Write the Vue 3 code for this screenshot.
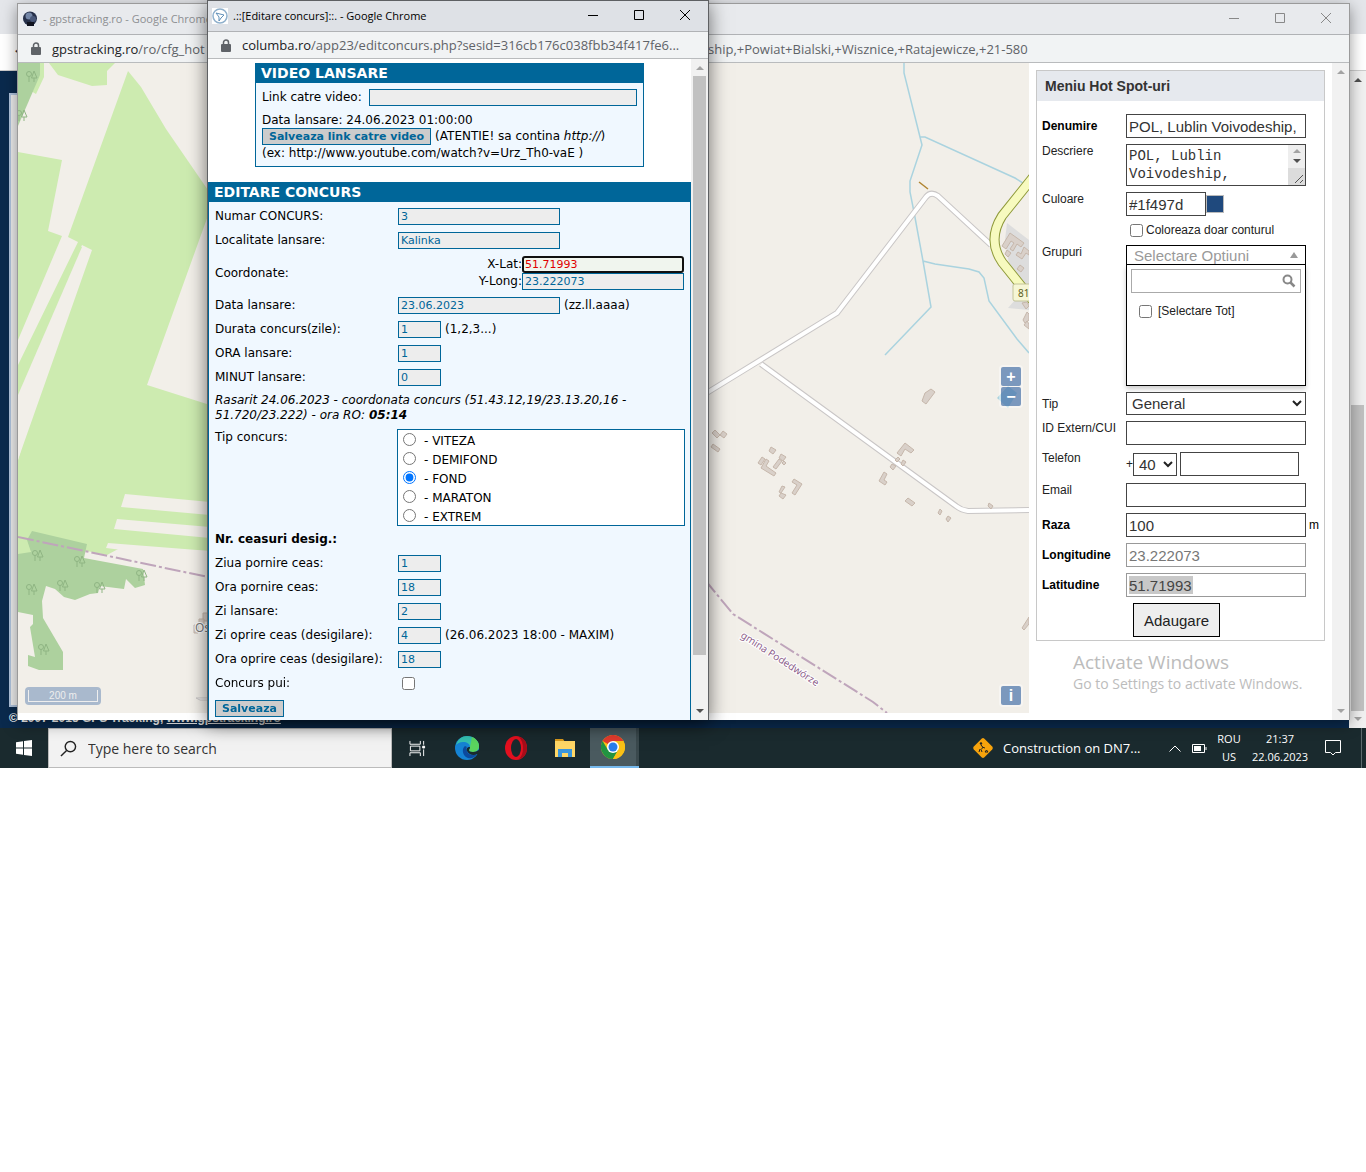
<script setup>
import { ref, onMounted } from 'vue'

const latField = ref(null)
const xLat = ref('51.71993')
const yLong = ref('23.222073')
const raceType = ref('FOND')
const raceTypes = ['VITEZA', 'DEMIFOND', 'FOND', 'MARATON', 'EXTREM']

const mainRows = ref([
  { id: 'numar', label: 'Numar CONCURS:', value: '3', wide: true },
  { id: 'localitate', label: 'Localitate lansare:', value: 'Kalinka', wide: true }
])
const startRows = ref([
  { id: 'data', label: 'Data lansare:', value: '23.06.2023', wide: true, note: '(zz.ll.aaaa)' },
  { id: 'durata', label: 'Durata concurs(zile):', value: '1', note: '(1,2,3...)' },
  { id: 'ora', label: 'ORA lansare:', value: '1' },
  { id: 'minut', label: 'MINUT lansare:', value: '0' }
])
const clockRows = ref([
  { id: 'ziua-pornire', label: 'Ziua pornire ceas:', value: '1' },
  { id: 'ora-pornire', label: 'Ora pornire ceas:', value: '18' },
  { id: 'zi-lansare', label: 'Zi lansare:', value: '2' },
  { id: 'zi-oprire', label: 'Zi oprire ceas (desigilare):', value: '4', note: '(26.06.2023 18:00 - MAXIM)' },
  { id: 'ora-oprire', label: 'Ora oprire ceas (desigilare):', value: '18' }
])

const trees = [
  [26, 71], [16, 110], [32, 550], [74, 556], [136, 570], [26, 584], [57, 580], [94, 582], [38, 644]
]

const buildings = [
  'M715 430l5 5-3 3-5-5z', 'M723 431l4 3-3 4-4-3z', 'M713 444l7 5-2 3-7-5z',
  'M771 447l5 3-3 4-4-3z', 'M781 454l5 3-3 4-4-3z', 'M762 457l3 2-4 6-3-2z',
  'M766 459l3 2-3 5 10 7-2 3-13-8z', 'M779 459l3 2-6 8-3-2z', 'M784 461l2 2-2 2-2-2z',
  'M794 479l8 5-7 11-3-2 5-8-5-3z', 'M782 486l3 1-4 6-2-1z', 'M781 493l5 2-3 4-4-3z',
  'M931 389l4 3-9 12-4-3 3-8z', 'M905 443l9 7-3 3-6-4-4 7-4-3z', 'M898 457l2 2-3 3-2-2z',
  'M903 460l3 2-3 4-2-2z', 'M892 464l4 2-3 4-3-3z', 'M884 472l3 2-3 6 3 2-2 3-6-4z',
  'M908 498l7 5-3 3-7-5z', 'M940 509l2 2-2 4-2-2z', 'M948 516l3 2-3 4-2-3z',
  'M989 503l4 3-2 3-3-3z', 'M1029 617v7l-5 6-2-2z',
  'M1010 233l14 10-3 4-4-3-4 7-3-2 4-6-3-2-5 8-4-3z', 'M1024 247l5 4v4l-3-2-4 6-6-4 2-3 3 2z',
  'M1007 250l4 3-3 4-3-3z', 'M1020 265l4 3-3 4-4-3z', 'M1022 303l5-1 2 4-3 3z',
  'M1027 312l2 2v6l-4 3-2-3z', 'M1027 321l2 3v5l-5-4z',
  'M203 613h5v8h-5z', 'M199 619h5v5h-5z', 'M194 625h4v8h-4z'
]

onMounted(() => latField.value?.focus({ preventScroll: true }))
</script>

<template>
  <div class="screen">
    <main class="desktop">
      <section class="browser">
        <div class="browser-tabs"></div>
        <div class="browser-tools"><span class="back">←</span></div>
        <div class="browser-body">
          <div class="site">
            <div class="site-frame"></div>
            <p class="copyright">© 2007-2015 GPS Tracking, <a href="#">www.gpstracking.ro</a></p>
          </div>
          <div class="scrollbar page-scroll">
            <i class="arrow up"></i>
            <i class="thumb"></i>
            <i class="arrow down pale"></i>
          </div>
        </div>
      </section>

      <section class="window tracking">
        <header class="titlebar">
          <svg class="favicon" viewBox="0 0 16 16"><rect width="16" height="16" fill="#e6eaf0" /><circle cx="8" cy="7.500" r="7" fill="#26304a" /><circle cx="7" cy="5" r="3.500" fill="#7487a8" /><circle cx="11" cy="8" r="3" fill="#49587a" /><path d="M5 11h7v4H5z" fill="#10131f" /></svg>
          <h1>- gpstracking.ro - Google Chrome</h1>
          <div class="controls">
            <button aria-label="Minimize"><svg viewBox="0 0 12 12"><path d="M1 6.500h10" /></svg></button>
            <button aria-label="Maximize"><svg viewBox="0 0 12 12"><path d="M1.500 1.500h9v9h-9z" /></svg></button>
            <button aria-label="Close"><svg viewBox="0 0 12 12"><path d="M1 1l10 10M11 1L1 11" /></svg></button>
          </div>
        </header>
        <div class="address">
          <svg class="lock" viewBox="0 0 10 13"><path d="M2.500 6V3.500a2.500 2.500 0 0 1 5 0V6" fill="none" stroke="#5f6368" stroke-width="1.500" /><rect y="5" width="10" height="8" rx="1" fill="#5f6368" /></svg>
          <span class="address-start"><b>gpstracking.ro</b>/ro/cfg_hot</span>
          <span class="address-end">ship,+Powiat+Bialski,+Wisznice,+Ratajewicze,+21-580</span>
        </div>
        <div class="window-body">
          <div class="map">
            <svg class="map-art" viewBox="18 63 1011 650" preserveAspectRatio="xMinYMin slice">
              <defs>
                <g id="tree" fill="none" stroke="#8fb583" stroke-width="1">
                  <circle cx="3" cy="3" r="2.500" /><path d="M3 5.500V11M8 0l3 7H5.500zM8 7v4" />
                </g>
              </defs>
              <path d="M18 63h1011v650H18z" fill="#f2efe9" />
              <g fill="#cdebb0">
                <path d="M49 63l9 12 34 11 15-1V71l8-8zM40 63h4v14l-8 17-5-3z" />
                <path d="M18 152l44 8-14 71 14 5-44 104z" />
                <path d="M128 71l13 16 25 42 44 64v17l-63 175 63 20v146l-90-3-13 7-20-4-72 10-1-90L92 250l-10-5-64 140v-20l60-123-10-5z" />
                <path d="M79 246l3 1-64 148v-26z" />
              </g>
              <g fill="#f2efe9">
                <path d="M125 494l85 8v13l-89-8zM117 519l93 8v11l-96-9zM108 543l102 8v10l-104-13z" />
                <path d="M18 432l9-3-9 31z" />
              </g>
              <g fill="#add19e">
                <path d="M18 63h22v12L18 126z" />
                <path d="M32 531l55 13-3 14 59 11 2 16-10 3-9-9-2 10-24-3-2 7-8 1-15 6-11-3-9-8-9-3-4 15 1 17 20 34v18H39l-11-4v-11l7 2-5-30 3-3v-9l-15-3v-58l13-2-4-12z" />
              </g>
              <use v-for="(t, i) in trees" :key="i" href="#tree" :x="t[0]" :y="t[1]" />
              <g fill="#ddd">
                <path d="M1007 223l22 17v70l-21-2 21 23-21-23 7-8-10-60z" />
              </g>
              <g fill="none" stroke="#aad3df" stroke-width="1.500">
                <path d="M904 63v10l16 64 2 8-12 36v11l4 20 9 49 8 46-46 48M920 137h5l90 41 14 9M923 261l12 3 34 5 10 3 5 6 5 23 28 38 12 14" />
              </g>
              <path d="M997 398l11-12 9 7-9 15z" fill="#aad3df" />
              <g fill="none" stroke="#c9c6c6" stroke-width="6">
                <path d="M705 394l132-81 89-116q5-6 12-1l53 49M761 364l195 142q5 4 12 5l61-1" />
              </g>
              <g fill="none" stroke="#fff" stroke-width="4">
                <path d="M705 394l132-81 89-116q5-6 12-1l53 49M761 364l195 142q5 4 12 5l61-1" />
              </g>
              <path d="M919 182l9 7" stroke="#b08430" stroke-width="1.500" />
              <path d="M1034 176l-32 40q-15 24 0 46l32 40" fill="none" stroke="#8f9a3a" stroke-width="10" />
              <path d="M1034 176l-32 40q-15 24 0 46l32 40" fill="none" stroke="#f7fabf" stroke-width="8" />
              <g fill="#d9d0c9" stroke="#c6b7ab" stroke-width="1"><path v-for="(d, i) in buildings" :key="i" :d="d" /></g>
              <rect x="1013" y="284" width="24" height="17" rx="2" fill="#f6f6d5" stroke="#c4c49a" />
              <text x="1018" y="297" class="road-no">81</text>
              <g fill="none" stroke="#bfa5bb" stroke-width="2" stroke-dasharray="16 3 3 3">
                <path d="M18 537l190 40M705 580l28 34 140 88 14 11" />
              </g>
              <text class="commune" transform="translate(740 637) rotate(33)">gmina Podedwórze</text>
              <text x="195" y="632" class="village">Os</text>
              <path d="M196 698h14v2h-10z" fill="#fff" stroke="#c9c6c6" stroke-width="1" />
            </svg>
            <div class="zoom-box">
              <button aria-label="Zoom in">+</button>
              <button aria-label="Zoom out">−</button>
            </div>
            <div class="info-box"><button>i</button></div>
            <div class="scale"><span>200 m</span></div>
          </div>

          <aside class="side">
            <form class="spot" @submit.prevent>
              <h2>Meniu Hot Spot-uri</h2>
              <div class="spot-rows">
                <div class="row bold"><label for="name">Denumire</label><input id="name" value="POL, Lublin Voivodeship,"></div>
                <div class="row">
                  <label for="desc">Descriere</label>
                  <div class="area">
                    <textarea id="desc">POL, Lublin Voivodeship,</textarea>
                    <div class="area-scroll">
                      <i class="arrow up"></i><i class="arrow down"></i>
                      <svg viewBox="0 0 17 17"><path d="M7 15l8-8M12 15l3-3" stroke="#555" fill="none" /></svg>
                    </div>
                  </div>
                </div>
                <div class="row">
                  <label for="colour">Culoare</label>
                  <div class="colour"><input id="colour" value="#1f497d"><i class="swatch"></i></div>
                </div>
                <div class="row outline"><span></span><label><input type="checkbox"> Coloreaza doar conturul</label></div>
                <div class="row groups">
                  <label for="groups">Grupuri</label>
                  <div class="multi">
                    <button id="groups" class="multi-head" type="button"><span>Selectare Optiuni</span><i class="arrow up"></i></button>
                    <div class="multi-body">
                      <div class="multi-search">
                        <input aria-label="Cauta">
                        <svg viewBox="0 0 14 14"><circle cx="5.500" cy="5.500" r="4" fill="none" stroke="#888" stroke-width="2" /><path d="M8.500 8.500l4 4" stroke="#888" stroke-width="2.500" /></svg>
                      </div>
                      <label><input type="checkbox">[Selectare Tot]</label>
                    </div>
                  </div>
                </div>
                <div class="row tip">
                  <label for="kind">Tip</label>
                  <div class="select"><select id="kind"><option>General</option></select><svg viewBox="0 0 10 7"><path d="M1 1l4 4 4-4" /></svg></div>
                </div>
                <div class="row"><label for="ext">ID Extern/CUI</label><input id="ext"></div>
                <div class="row">
                  <label for="phone">Telefon</label>
                  <div class="phone">
                    <span>+</span>
                    <div class="select"><select aria-label="Prefix"><option>40</option></select><svg viewBox="0 0 10 7"><path d="M1 1l4 4 4-4" /></svg></div>
                    <input id="phone">
                  </div>
                </div>
                <div class="row"><label for="mail">Email</label><input id="mail"></div>
                <div class="row bold"><label for="radius">Raza</label><input id="radius" value="100"><span>m</span></div>
                <div class="row bold"><label for="lng">Longitudine</label><input id="lng" class="muted" value="23.222073"></div>
                <div class="row bold"><label for="lat">Latitudine</label><input id="lat" class="muted picked" value="51.71993"></div>
                <div class="row"><span></span><button class="add">Adaugare</button></div>
              </div>
            </form>
            <div class="activate">
              <p class="activate-title">Activate Windows</p>
              <p>Go to Settings to activate Windows.</p>
            </div>
          </aside>
          <div class="scrollbar"><i class="arrow up pale"></i><i class="arrow down pale"></i></div>
        </div>
      </section>

      <section class="window contest">
        <header class="titlebar">
          <svg class="favicon" viewBox="0 0 16 16"><rect width="16" height="16" fill="#fff" /><circle cx="8" cy="8" r="7" fill="none" stroke="#8fb0cc" stroke-width="1.500" /><path d="M4 5l4 1 4 1-3 3-2 3V9z" fill="none" stroke="#5f8fb8" /></svg>
          <h1>.::[Editare concurs]::. - Google Chrome</h1>
          <div class="controls">
            <button aria-label="Minimize"><svg viewBox="0 0 12 12"><path d="M1 6.500h10" /></svg></button>
            <button aria-label="Maximize"><svg viewBox="0 0 12 12"><path d="M1.500 1.500h9v9h-9z" /></svg></button>
            <button aria-label="Close"><svg viewBox="0 0 12 12"><path d="M1 1l10 10M11 1L1 11" /></svg></button>
          </div>
        </header>
        <div class="address">
          <svg class="lock" viewBox="0 0 10 13"><path d="M2.500 6V3.500a2.500 2.500 0 0 1 5 0V6" fill="none" stroke="#5f6368" stroke-width="1.500" /><rect y="5" width="10" height="8" rx="1" fill="#5f6368" /></svg>
          <span><b>columba.ro</b>/app23/editconcurs.php?sesid=316cb176c038fbb34f417fe6...</span>
        </div>
        <div class="window-body">
          <div class="forms">
            <form class="panel video" @submit.prevent>
              <h2>VIDEO LANSARE</h2>
              <div class="video-body">
                <div class="video-link"><label for="video">Link catre video:</label><input id="video"></div>
                <p>Data lansare: 24.06.2023 01:00:00</p>
                <p class="video-save"><button class="save">Salveaza link catre video</button> <span>(ATENTIE! sa contina <em>http://</em>)</span></p>
                <p>(ex: http://www.youtube.com/watch?v=Urz_Th0-vaE )</p>
              </div>
            </form>

            <form class="panel edit" @submit.prevent>
              <h2>EDITARE CONCURS</h2>
              <div class="edit-body">
                <div v-for="r in mainRows" :key="r.id" class="line">
                  <label :for="r.id">{{ r.label }}</label>
                  <input :id="r.id" v-model="r.value" :class="{ wide: r.wide }">
                </div>
                <div class="line coords">
                  <span>Coordonate:</span>
                  <div class="pair">
                    <div><label for="xlat">X-Lat:</label><input id="xlat" ref="latField" v-model="xLat" class="wide active"></div>
                    <div><label for="ylong">Y-Long:</label><input id="ylong" v-model="yLong" class="wide"></div>
                  </div>
                </div>
                <div v-for="r in startRows" :key="r.id" class="line">
                  <label :for="r.id">{{ r.label }}</label>
                  <div class="value"><input :id="r.id" v-model="r.value" :class="{ wide: r.wide }"><span>{{ r.note }}</span></div>
                </div>
                <p class="sunrise">Rasarit 24.06.2023 - coordonata concurs (51.43.12,19/23.13.20,16 -<br>51.720/23.222) - ora RO: <b>05:14</b></p>
                <div class="line kinds">
                  <span>Tip concurs:</span>
                  <div class="kind-box">
                    <label v-for="k in raceTypes" :key="k"><input v-model="raceType" type="radio" name="kind" :value="k"><span>- {{ k }}</span></label>
                  </div>
                </div>
                <p class="line subhead">Nr. ceasuri desig.:</p>
                <div v-for="r in clockRows" :key="r.id" class="line">
                  <label :for="r.id">{{ r.label }}</label>
                  <div class="value"><input :id="r.id" v-model="r.value"><span>{{ r.note }}</span></div>
                </div>
                <div class="line"><label for="pui">Concurs pui:</label><input id="pui" type="checkbox"></div>
                <button class="save">Salveaza</button>
              </div>
            </form>
          </div>
          <div class="scrollbar"><i class="arrow up pale"></i><i class="thumb"></i><i class="arrow down"></i></div>
        </div>
      </section>
    </main>

    <footer class="taskbar">
      <button class="start" aria-label="Start"><svg viewBox="0 0 16 16"><path d="M0 2.300l7-1V7.500H0zM8 1.100L16 0v7.500H8zM0 8.500h7v6.200l-7-1zM8 8.500h8V16l-8-1.100z" fill="#fff" /></svg></button>
      <label class="search">
        <svg viewBox="0 0 18 18"><circle cx="11" cy="7" r="5.500" /><path d="M7 11l-6 6" /></svg>
        <input placeholder="Type here to search" aria-label="Search">
      </label>
      <button class="app" aria-label="Task view"><svg class="small" viewBox="0 0 18 18" fill="none" stroke="#fff"><path d="M1 1v3.500h11V1M1 17v-3.500h11V17M1.500 6.500h10v5h-10zM15.500 1v4M15.500 10v7" /><path d="M14.500 6.500h2v2h-2z" fill="#fff" /></svg></button>
      <button class="app" aria-label="Edge">
        <svg viewBox="0 0 24 24"><circle cx="12" cy="12" r="12" fill="#1583d4" /><path d="M1 9C3 3 7 0 12 0c7 0 12 5 12 10 0 4-3 6-6 6s-4-1-4-2c0-1 1-1 1-3 0-3-3-5-7-5-3 0-5 1-7 3z" fill="#35c1b1" /><path d="M17 1c5 2 7 6 7 9 0 4-3 6-6 6s-4-1-4-2c0-1 1-1 1-3z" fill="#5bd65f" /><path d="M10 10c-3 2-3 8 1 11 3 2 8 2 11-3-4 2-9 1-10-3-1-2-1-3 0-4z" fill="#0c4a9e" /><path d="M15 11c0 2-1 2-1 3 0 1 1 2 4 2 2 0 4-1 6-2v4l-2 0c-3 2-8 1-10-3-1-2 0-4 3-4z" fill="#1a2a2e" /></svg>
      </button>
      <button class="app" aria-label="Opera">
        <svg viewBox="0 0 24 24"><ellipse cx="12" cy="12" rx="11" ry="12" fill="#e3101f" /><ellipse cx="12" cy="12" rx="5" ry="9" fill="#1a2a2e" /><path d="M15 1c5 1 8 5 8 11s-3 10-8 11c3-3 4-7 4-11s-1-8-4-11z" fill="#a60d1a" /></svg>
      </button>
      <button class="app" aria-label="File Explorer">
        <svg viewBox="0 0 24 24"><path d="M2 3h8l2 3H2z" fill="#d99a1c" /><path d="M2 5h20v16H2z" fill="#ffd766" /><path d="M5 13h14v8h-4v-4H9v4H5z" fill="#3a96dd" /></svg>
      </button>
      <button class="app running" aria-label="Chrome">
        <svg viewBox="0 0 24 24"><circle cx="12" cy="12" r="12" fill="#fbc116" /><path d="M12 12L1.600 6A12 12 0 0 1 22.400 6H12z" fill="#e33b2e" /><path d="M1.600 6A12 12 0 0 0 12 24l5.200-9L12 12l-5 3z" fill="#229342" /><path d="M12 6h10.400A12 12 0 0 1 12 24l5.200-9z" fill="#fbc116" /><circle cx="12" cy="12" r="6" fill="#fff" /><circle cx="12" cy="12" r="4.500" fill="#2a7de9" /></svg>
      </button>
      <i class="stacked"></i>
      <div class="tray">
        <svg class="works" viewBox="0 0 22 22"><rect x="3.500" y="3.500" width="15" height="15" rx="2" transform="rotate(45 11 11)" fill="#f7a30c" /><circle cx="9" cy="6.500" r="1.200" fill="#222" /><path d="M9 8l2 2.500-2 2 1 2.500M10 10l3 1M8 12l-1 3M13 15h3l-1.500-2z" fill="none" stroke="#222" stroke-width="1" /></svg>
        <span class="news">Construction on DN7...</span>
        <svg class="chevron" viewBox="0 0 12 7"><path d="M0.500 6.500L6 1l5.500 5.500" /></svg>
        <svg class="battery" viewBox="0 0 15 9"><path d="M0.500 0.500h12v8h-12zM14 3v3" fill="none" stroke="#fff" /><path d="M2 2h7v5H2z" fill="#fff" /></svg>
        <span class="stack lang">ROU<br>US</span>
        <span class="stack clock">21:37<br>22.06.2023</span>
        <svg class="notice" viewBox="0 0 16 16"><path d="M0.500 0.500h15v12h-5L8 15l-2.500-2.500h-5z" /></svg>
      </div>
    </footer>
  </div>
</template>

<style>
body {
  margin: 0;
  background: #fff;
}
</style>

<style scoped>
* {
  box-sizing: border-box;
}
h1, h2, p {
  margin: 0;
}
button, input, select, textarea {
  margin: 0;
  border-radius: 0;
  font-family: inherit;
}
i {
  display: block;
  flex: none;
}
svg {
  flex: none;
}
.screen {
  font: 12px/14px "Liberation Sans", sans-serif;
  color: #000;
}
.desktop {
  display: grid;
  grid-template-columns: 100%;
}
.desktop > * {
  grid-area: 1 / 1;
}

.browser {
  display: flex;
  flex-direction: column;
}
.browser-tabs {
  height: 34px;
  background: #e4e6ea;
}
.browser-tools {
  height: 37px;
  padding: 8px 13px;
  background: #fff;
  border-bottom: 1px solid #ccc;
}
.browser-body {
  flex: 1;
  display: flex;
}
.site {
  flex: 1;
  display: flex;
  flex-direction: column;
  padding: 22px 9px 2px;
  background: #0a2a4d;
}
.site-frame {
  flex: 1;
  border: 2px solid #b0c4de;
  background: #eee;
}
.copyright {
  padding-top: 3px;
  font-size: 12px;
  line-height: 16px;
  font-weight: bold;
  color: #fff;
}
.copyright a {
  color: #fff;
}

.scrollbar {
  flex: none;
  display: flex;
  flex-direction: column;
  justify-content: space-between;
  align-items: center;
  width: 17px;
  padding: 7px 0;
  background: #f1f1f1;
}
.arrow {
  border: 4px solid transparent;
}
.up {
  border-top-width: 0;
  border-bottom-color: #505050;
}
.down {
  border-bottom-width: 0;
  border-top-color: #505050;
}
.up.pale {
  border-bottom-color: #a3a3a3;
}
.down.pale {
  border-top-color: #a3a3a3;
}
.thumb {
  width: 13px;
  background: #c1c1c1;
}
.page-scroll .thumb {
  height: 306px;
  margin: auto 0 6px;
}

.window {
  display: flex;
  flex-direction: column;
  border: 1px solid #9a9a9a;
  border-bottom: 0;
  background: #fff;
}
.tracking {
  z-index: 1;
  margin: 3px 16px 8px 17px;
  box-shadow: 0 4px 14px rgba(0, 0, 0, 0.4);
}
.contest {
  z-index: 2;
  width: 502px;
  margin: 0 0 8px 207px;
  border-color: #5e6063;
  box-shadow: 0 4px 18px rgba(0, 0, 0, 0.55);
}
.titlebar {
  display: flex;
  align-items: center;
  height: 31px;
  padding-left: 4px;
  background: #e8eaed;
  border-bottom: 1px solid #b0b2b5;
}
.contest .titlebar {
  background: #dee1e6;
}
.favicon {
  width: 16px;
  height: 16px;
}
h1 {
  flex: 1;
  padding-left: 5px;
  font: 11px/16px "Open Sans", "Noto Sans", sans-serif;
  white-space: nowrap;
}
.tracking h1 {
  color: #8d8f92;
}
.controls {
  display: flex;
}
.controls button {
  width: 46px;
  height: 30px;
  padding: 0;
  border: 0;
  background: none;
}
.controls svg {
  width: 12px;
  height: 12px;
  fill: none;
  stroke: #000;
}
.tracking .controls svg {
  stroke: #888;
}
.address {
  display: flex;
  align-items: center;
  height: 28px;
  padding-left: 13px;
  background: #f1f3f4;
  border-bottom: 1px solid #b9bbbd;
  font: 13px/18px "Open Sans", "Noto Sans", sans-serif;
  color: #5f6368;
  white-space: nowrap;
}
.contest .address {
  height: 27px;
}
.address b {
  font-weight: normal;
  color: #202124;
}
.lock {
  width: 10px;
  height: 13px;
  margin-right: 11px;
}
.address-start {
  flex: none;
  width: 656px;
}
.window-body {
  flex: 1;
  display: flex;
}

.map {
  flex: 1;
  position: relative;
  margin-bottom: 7px;
  overflow: hidden;
  background: #f2efe9;
}
.map-art {
  position: absolute;
  inset: 0;
  width: 100%;
  height: 100%;
}
.commune, .village {
  font: 10px "Noto Sans", sans-serif;
  fill: #8d618b;
  stroke: #fff;
  stroke-width: 2px;
  paint-order: stroke;
}
.village {
  font-size: 12px;
  fill: #777;
}
.road-no {
  font: 10px "Noto Sans", sans-serif;
  fill: #5d6021;
}
.zoom-box, .info-box {
  position: absolute;
  right: 6px;
  display: grid;
  gap: 1px;
  padding: 2px;
  border-radius: 4px;
  background: rgba(255, 255, 255, 0.4);
}
.zoom-box {
  top: 302px;
}
.info-box {
  bottom: 6px;
}
.zoom-box button, .info-box button {
  width: 20px;
  height: 19px;
  padding: 0;
  border: 0;
  border-radius: 2px;
  background: rgba(0, 60, 136, 0.5);
  color: #fff;
  font: bold 16px/18px "Liberation Sans", sans-serif;
}
.scale {
  position: absolute;
  left: 7px;
  bottom: 8px;
  padding: 3px;
  border-radius: 4px;
  background: #a9b9cd;
}
.scale span {
  display: block;
  width: 70px;
  height: 12px;
  border: 1px solid #eee;
  border-top: 0;
  color: #eee;
  font-size: 10px;
  line-height: 12px;
  text-align: center;
}

.side {
  flex: none;
  width: 303px;
  padding: 7px 7px 0;
}
.spot {
  border: 1px solid #c8c8c8;
}
.spot h2 {
  padding: 0 8px;
  background: #e6e9ee;
  font-size: 14px;
  line-height: 30px;
  color: #333;
}
.spot-rows {
  display: flex;
  flex-direction: column;
  gap: 6px;
  padding: 13px 0 3px 5px;
}
.row {
  display: grid;
  grid-template-columns: 84px 180px auto;
  align-items: start;
  color: #222;
}
.bold {
  align-items: center;
  color: #000;
}
.bold label {
  font-weight: bold;
}
.bold span {
  padding-left: 3px;
}
.row input:not([type="checkbox"]), .row select, textarea {
  width: 100%;
  height: 24px;
  padding: 0 2px;
  border: 1px solid #444;
  background: #fff;
  color: #333;
  font-size: 15px;
  outline: 0;
}
.row input[type="checkbox"] {
  width: 13px;
  height: 13px;
}
.row input.muted {
  border-color: #999;
  color: #777;
}
.row input.picked {
  background: linear-gradient(#c8c8c8, #c8c8c8) 2px 2px / 64px 18px no-repeat;
  color: #444;
}
.area {
  position: relative;
  height: 42px;
}
.row textarea {
  display: block;
  height: 42px;
  padding: 2px 18px 0 2px;
  resize: none;
  overflow: hidden;
  font: 14px/18px "Liberation Mono", monospace;
}
.area-scroll {
  position: absolute;
  top: 1px;
  right: 1px;
  bottom: 1px;
  display: flex;
  flex-direction: column;
  align-items: center;
  justify-content: space-between;
  width: 17px;
  padding-top: 4px;
  background: #eee;
}
.area-scroll .up {
  border-bottom-color: #a3a3a3;
}
.area-scroll svg {
  width: 17px;
  height: 17px;
  background: #dcdcdc;
}
.colour {
  display: flex;
  align-items: center;
}
.row .colour input {
  width: 80px;
}
.swatch {
  width: 18px;
  height: 18px;
  border: 1px solid #bbb;
  background: #1f497d;
}
.outline label {
  display: flex;
  align-items: center;
  gap: 3px;
  height: 16px;
  padding-left: 4px;
  white-space: nowrap;
}
.groups {
  padding-top: 1px;
}
.multi-head {
  display: flex;
  justify-content: space-between;
  align-items: center;
  width: 100%;
  height: 20px;
  padding: 0 7px;
  border: 1px solid #000;
  background: #fff;
  color: #999;
  font-size: 15px;
}
.multi-head .arrow {
  border-bottom: 6px solid #999;
}
.multi-body {
  height: 121px;
  padding: 4px;
  border: 1px solid #000;
  border-top: 0;
  box-shadow: 0 3px 5px rgba(0, 0, 0, 0.2);
}
.multi-search {
  display: flex;
  align-items: center;
  height: 24px;
  padding-right: 4px;
  border: 1px solid #aaa;
}
.row .multi-search input {
  flex: 1;
  min-width: 0;
  height: 20px;
  border: 0;
}
.multi-search svg {
  width: 14px;
  height: 14px;
}
.multi-body label {
  display: flex;
  align-items: center;
  gap: 6px;
  padding: 11px 8px;
}
.tip {
  align-items: center;
}
.select {
  position: relative;
}
.row .select select {
  display: block;
  height: 23px;
  padding: 0 5px;
  appearance: none;
}
.select svg {
  position: absolute;
  top: 8px;
  right: 4px;
  width: 10px;
  height: 7px;
  fill: none;
  stroke: #222;
  stroke-width: 2;
}
.phone {
  display: flex;
  align-items: center;
  margin: 1px 0;
}
.phone .select {
  width: 44px;
  margin-right: 3px;
}
.row .phone input {
  width: 119px;
}
.add {
  justify-self: start;
  height: 34px;
  margin-left: 7px;
  padding: 0 10px;
  border: 1px solid #000;
  background: #eee;
  color: #222;
  font-size: 15px;
}
.activate {
  padding: 9px 0 0 37px;
  font: 14px/20px "Open Sans", "Noto Sans", sans-serif;
  color: #bcbcbc;
  white-space: nowrap;
}
.activate-title {
  font-size: 19px;
  line-height: 24px;
}

.contest .window-body {
  font: 12px/16px "DejaVu Sans", Verdana, sans-serif;
}
.forms {
  flex: 1;
  padding-top: 4px;
}
.panel {
  border: 1px solid #069;
  background: #f0f8ff;
}
.panel h2 {
  padding: 0 5px;
  background: #069;
  color: #fff;
  font-size: 14px;
  line-height: 19px;
}
.panel input:not([type]) {
  width: 43px;
  height: 17px;
  padding: 0 2px;
  border: 1px solid #069;
  background: #ededed;
  color: #069;
  font-size: 11px;
  outline: 0;
}
.panel input[type] {
  width: 13px;
  height: 13px;
}
.panel input.wide:not([type]) {
  width: 162px;
}
.save {
  height: 17px;
  padding: 0 6px;
  border: 1px solid #069;
  background: #ccc;
  color: #069;
  font-size: 11px;
  line-height: 15px;
  font-weight: bold;
  white-space: nowrap;
}
.video {
  width: 389px;
  margin: 0 auto 15px 47px;
}
.video-body {
  padding: 6px 6px 5px;
  white-space: nowrap;
}
.video-link {
  display: flex;
  gap: 7px;
  margin-bottom: 6px;
}
.panel .video-link input:not([type]) {
  flex: 1;
}
.video-save {
  display: flex;
  gap: 4px;
}
.edit {
  border-bottom: 0;
}
.edit-body {
  padding: 2px 5px 3px 6px;
}
.line {
  display: grid;
  grid-template-columns: 183px 1fr;
  align-items: center;
  min-height: 24px;
}
.value {
  display: flex;
  gap: 4px;
}
.coords {
  min-height: 41px;
}
.pair {
  padding-right: 1px;
}
.pair > div {
  display: flex;
  justify-content: flex-end;
}
.panel input.active:not([type]) {
  border: 2px solid #101010;
  border-radius: 3px;
  background: #f0f5ee;
  color: #e00000;
  padding: 0 1px;
}
.sunrise {
  padding: 4px 0;
  font-style: italic;
  line-height: 15px;
  white-space: nowrap;
}
.kinds {
  align-items: start;
  padding: 2px 0 1px;
}
.kind-box {
  margin-left: -1px;
  border: 1px solid #069;
  background: #fff;
}
.kind-box label {
  display: flex;
  gap: 8px;
  height: 19px;
  padding: 3px 5px 0;
}
.subhead {
  font-weight: bold;
}
#pui {
  margin-left: 4px;
}
.edit .save {
  display: block;
  margin-top: 5px;
}
.contest .scrollbar {
  justify-content: flex-start;
}
.contest .thumb {
  flex: 1;
  margin: 6px 0 54px;
}

.taskbar {
  display: flex;
  align-items: center;
  height: 40px;
  background: #1a2a2e;
  color: #fff;
  font-family: "Open Sans", "Noto Sans", sans-serif;
}
.taskbar button {
  display: grid;
  place-items: center;
  height: 40px;
  padding: 0;
  border: 0;
  background: none;
}
.start {
  width: 48px;
}
.start svg {
  width: 16px;
  height: 16px;
}
.search {
  display: flex;
  align-items: center;
  gap: 11px;
  width: 344px;
  height: 40px;
  margin-right: 1px;
  padding-left: 11px;
  border: 1px solid #bbb;
  background: #f2f2f2;
}
.search svg {
  width: 17px;
  height: 17px;
  fill: none;
  stroke: #222;
  stroke-width: 1.5px;
}
.search input {
  flex: 1;
  min-width: 0;
  padding: 0;
  border: 0;
  background: none;
  font-size: 14px;
  outline: 0;
}
.search input::placeholder {
  color: #333;
}
.app {
  width: 49px;
}
.app svg {
  width: 24px;
  height: 24px;
}
.app .small {
  width: 17px;
  height: 17px;
}
.taskbar .running {
  width: 46px;
  margin-left: 1px;
  border-bottom: 2px solid #76b9ed;
  background: #4a5a5f;
}
.stacked {
  width: 3px;
  height: 40px;
  border-bottom: 2px solid #76b9ed;
  background: #3a494d;
}
.tray {
  display: flex;
  align-items: center;
  height: 40px;
  margin-left: auto;
  margin-right: 4px;
  padding-right: 20px;
  border-right: 1px solid #5c6a6d;
}
.works {
  width: 22px;
  height: 22px;
}
.news {
  width: 175px;
  padding-left: 9px;
  font-size: 13px;
  white-space: nowrap;
}
.chevron {
  width: 12px;
  height: 7px;
}
.battery {
  width: 15px;
  height: 9px;
  margin-left: 11px;
}
.chevron, .notice {
  fill: none;
  stroke: #fff;
}
.stack {
  font-size: 11px;
  line-height: 18px;
  text-align: center;
}
.lang {
  width: 44px;
}
.clock {
  width: 58px;
}
.notice {
  width: 16px;
  height: 16px;
  margin-left: 16px;
}
</style>
